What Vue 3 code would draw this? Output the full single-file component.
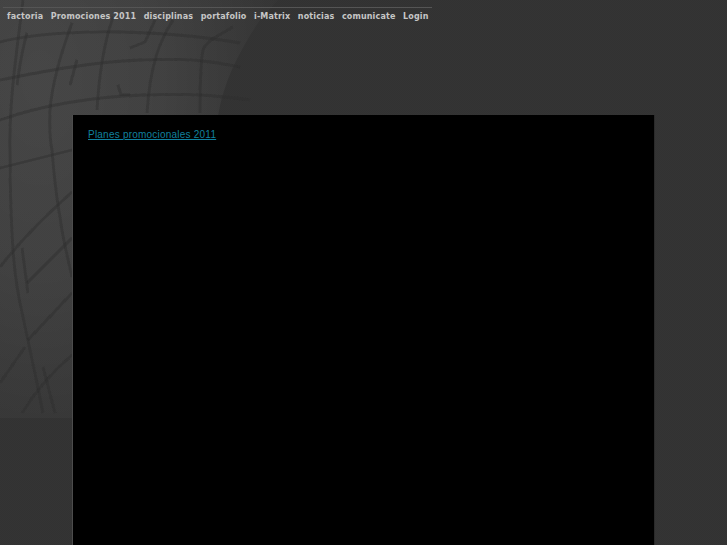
<script setup>
const items = ['factoria', 'Promociones 2011', 'disciplinas', 'portafolio', 'i-Matrix', 'noticias', 'comunicate', 'Login']
const thick = [
  'M0 42C30 34 80 31 120 32S200 36 240 43',
  'M0 80C40 72 90 62 140 60S210 61 240 67',
  'M0 120C40 106 90 97 143 95S220 96 250 100',
  'M27 33C22 50 19 70 17 85',
  'M23 0C17 50 9 100 10 150C10 190 11 220 13 250C15 280 19 300 23 317C29 345 33 365 37 383L43 413',
  'M72 23C62 50 52 85 50 110C49 130 50 140 52 150C54 175 56 195 60 217C63 240 67 255 72 277',
  'M113 17C105 40 99 75 97 110',
  'M173 20C160 40 150 65 147 113',
  'M233 27C220 35 207 40 203 50C200 65 200 90 200 113',
  'M0 168L72 150',
  'M0 267C25 235 50 212 72 192',
  'M27 283L72 238',
  'M28 340L72 293',
  'M0 383L25 347',
  'M22 413C35 392 52 372 72 355',
  'M17 157V183',
  'M22 248L28 293',
  'M43 367L55 413',
  'M155 20L145 42L130 48',
  'M77 60L70 85',
  'M118 85L121 95L130 95'
]
</script>

<template>
  <div class="page">
    <svg class="tread" width="300" height="420" viewBox="0 0 300 420" aria-hidden="true">
      <defs>
        <radialGradient id="sheen" gradientUnits="userSpaceOnUse" cx="0" cy="0" r="240" gradientTransform="translate(40 80) scale(1 1.6)">
          <stop offset="0" stop-color="#fff" stop-opacity="0.095" />
          <stop offset="0.5" stop-color="#fff" stop-opacity="0.07" />
          <stop offset="0.8" stop-color="#fff" stop-opacity="0.035" />
          <stop offset="1" stop-color="#fff" stop-opacity="0.012" />
        </radialGradient>
        <filter id="soft"><feGaussianBlur stdDeviation="0.6" /></filter>
      </defs>
      <path d="M0 0H278L260 20C240 50 224 80 218 116H73V418H0Z" fill="url(#sheen)" />
      <path v-for="d in thick" :key="d" :d="d" fill="none" stroke="#2c2c2c" stroke-opacity="0.45" stroke-width="2.8" filter="url(#soft)" />
    </svg>
    <nav class="nav">
      <a v-for="item in items" :key="item" class="nav-item">{{ item }}</a>
    </nav>
    <main class="panel">
      <a class="promo" href="#">Planes promocionales 2011</a>
    </main>
  </div>
</template>

<style scoped>
.page {
  position: relative;
  height: 545px;
  overflow: hidden;
  background: repeating-conic-gradient(#343434 0 25%, #323232 0 50%) 0 0 / 2px 2px;
  padding: 7px 0 0 3px;
  box-sizing: border-box;
}
.tread {
  position: absolute;
  left: 0;
  top: 0;
}
.nav {
  position: relative;
  display: flex;
  gap: 7.5px;
  width: 425px;
  height: 21px;
  padding: 0 0 0 4px;
  border-top: 1px solid #555;
  font: bold 8px/18px "DejaVu Sans", sans-serif;
  letter-spacing: 0.15px;
  color: #c6c6c6;
  white-space: nowrap;
}
.panel {
  position: relative;
  box-sizing: border-box;
  width: 583px;
  height: 430px;
  margin: 86px 0 0 69px;
  padding: 13px 15px;
  background: #000;
  border-left: 1px solid #4c4c4c;
  border-right: 1px solid #2a2a2a;
  font: 10px/14px "Liberation Sans", Arial, sans-serif;
}
.promo {
  color: #10809f;
  letter-spacing: 0.22px;
}
</style>
